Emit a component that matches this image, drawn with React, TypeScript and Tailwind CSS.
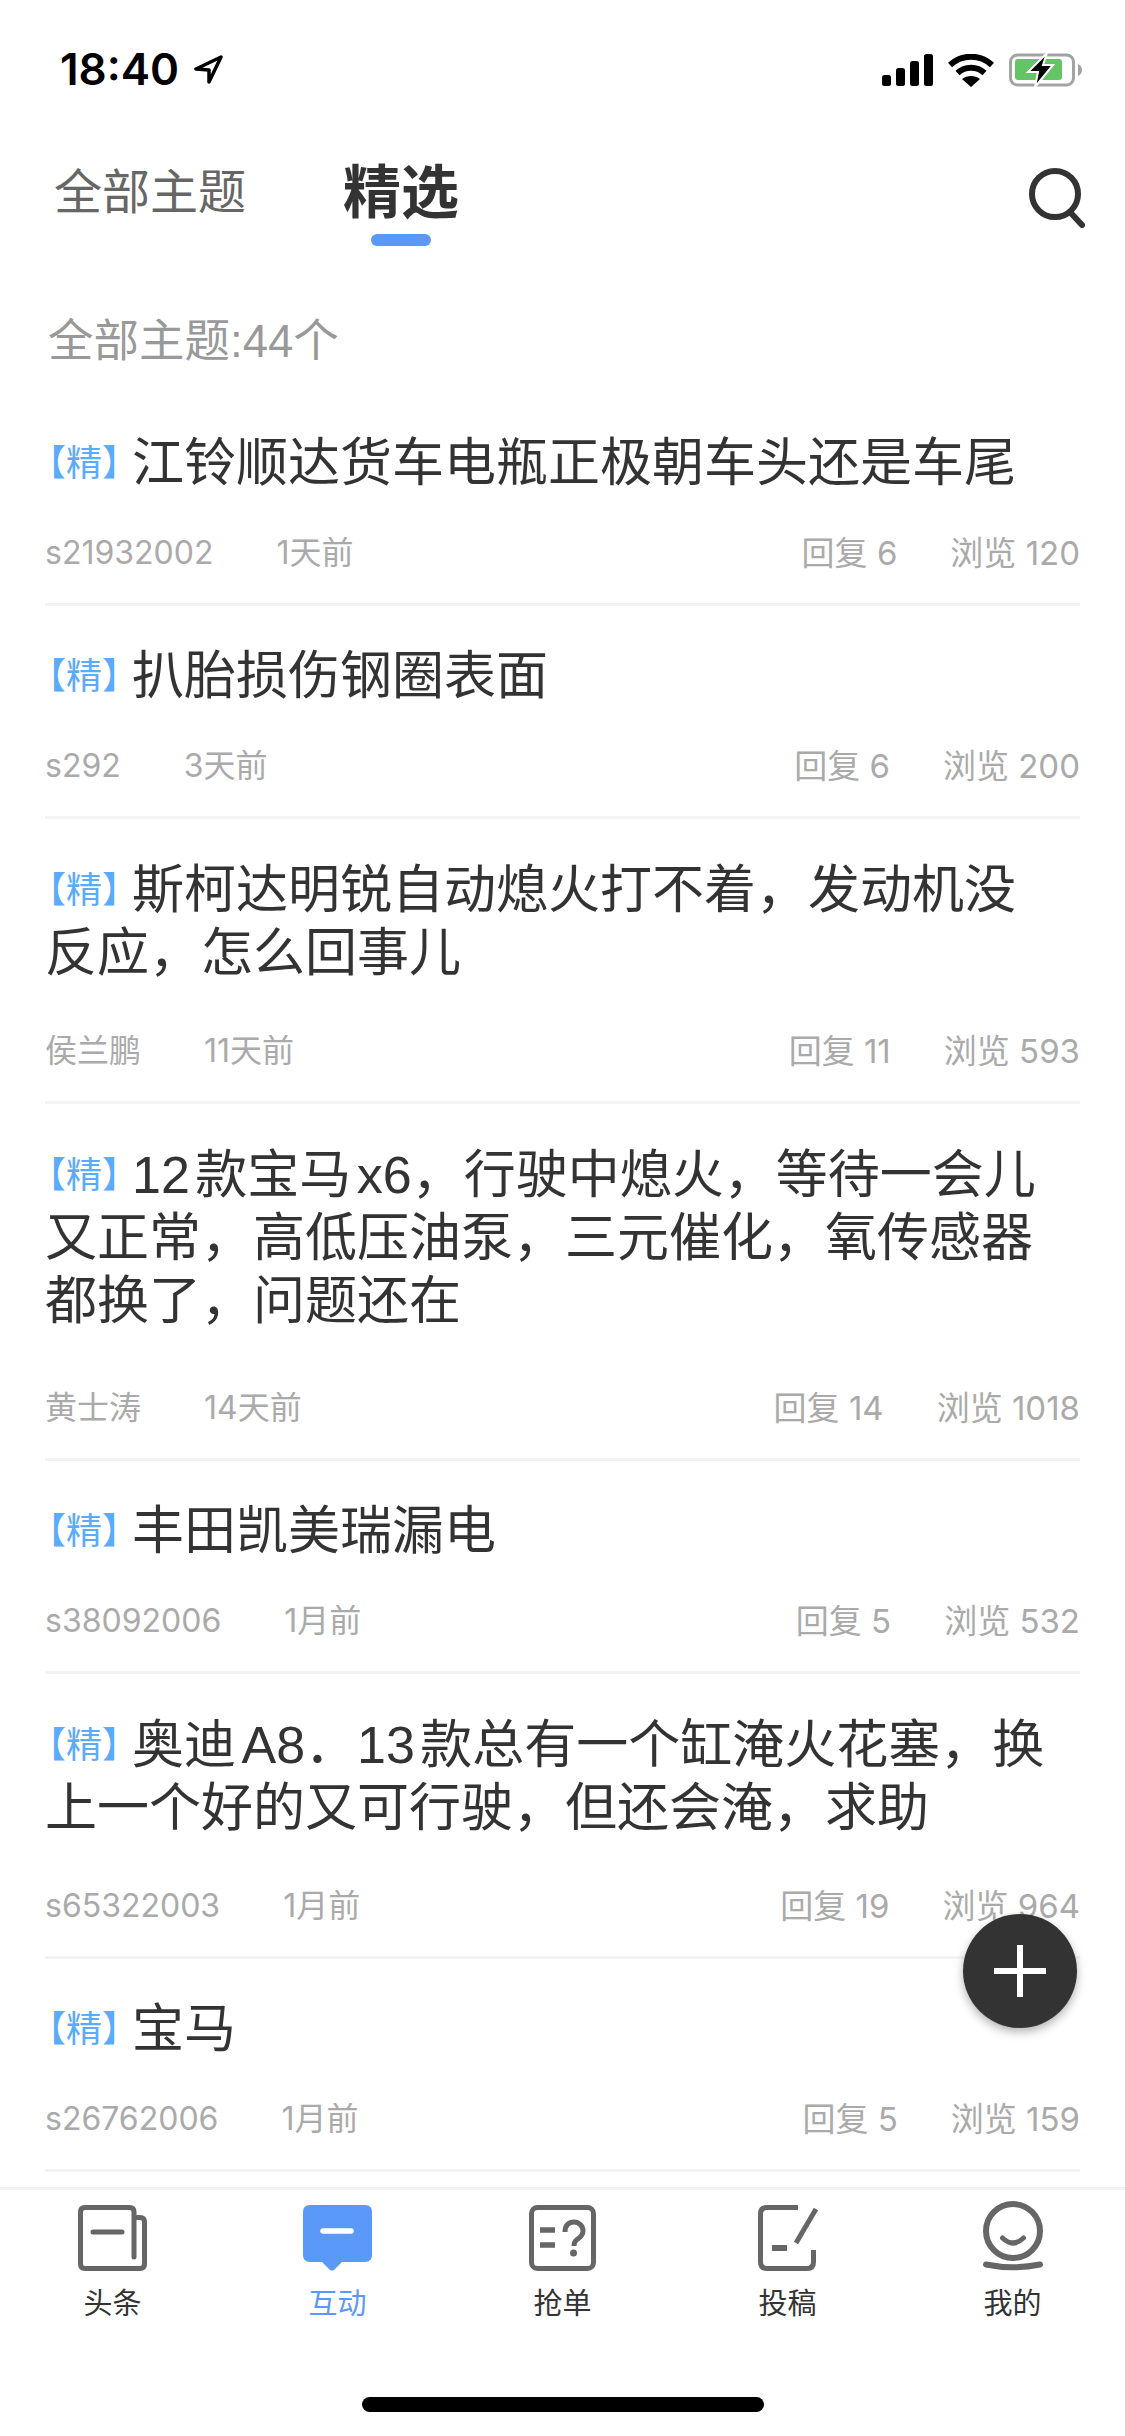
const topics = [
  { title: '江铃顺达货车电瓶正极朝车头还是车尾', author: 's21932002', time: '1天前', replies: 6, views: 120, bodyClass: 'h-[101px]' },
  { title: '扒胎损伤钢圈表面', author: 's292', time: '3天前', replies: 6, views: 200, bodyClass: 'h-[101px]' },
  { title: '斯柯达明锐自动熄火打不着，发动机没反应，怎么回事儿', author: '侯兰鹏', time: '11天前', replies: 11, views: 593, bodyClass: 'h-[173px] pt-[1px]' },
  { title: '12 款宝马 x6，行驶中熄火，等待一会儿又正常，高低压油泵，三元催化，氧传感器都换了，问题还在', author: '黄士涛', time: '14天前', replies: 14, views: 1018, bodyClass: 'h-[245px] pt-[1px]' },
  { title: '丰田凯美瑞漏电', author: 's38092006', time: '1月前', replies: 5, views: 532, bodyClass: 'h-[101px]' },
  { title: '奥迪 A8．13 款总有一个缸淹火花塞，换上一个好的又可行驶，但还会淹，求助', author: 's65322003', time: '1月前', replies: 19, views: 964, bodyClass: 'h-[173px] pt-[1px]' },
  { title: '宝马', author: 's26762006', time: '1月前', replies: 5, views: 159, bodyClass: 'h-[101px]' },
];

function StatusIcons() {
  return (
    <div className="flex items-center">
      <svg width="51" height="32" viewBox="0 0 51 32" fill="#000">
        <rect x="0" y="21" width="9" height="11" rx="2.5" />
        <rect x="14" y="14" width="9" height="18" rx="2.5" />
        <rect x="28" y="7" width="9" height="25" rx="2.5" />
        <rect x="42" y="0" width="9" height="32" rx="2.5" />
      </svg>
      <svg className="ml-[15px]" width="46" height="33" viewBox="0 0 46 33" fill="none" stroke="#000" strokeWidth="6">
        <path d="M2 11 C14 0 32 0 44 11" />
        <path d="M9.5 19 C17 12 29 12 36.5 19" />
        <path d="M23 33 L14 25 C19 21 27 21 32 25 Z" fill="#000" stroke="none" />
      </svg>
      <svg className="ml-[15px]" width="73" height="36" viewBox="0 0 73 36">
        <rect x="1.5" y="3" width="63" height="30" rx="7" fill="none" stroke="#a3a3a3" strokeWidth="3" />
        <rect x="6" y="7" width="47" height="21" rx="3" fill="#65c466" />
        <path d="M69 12 C71.5 13 73 15 73 18 C73 21 71.5 23 69 24 Z" fill="#a3a3a3" />
        <path d="M38 1 L19 20 L29 20 L26 35 L44 13 L34 13 Z" fill="#000" stroke="#fff" strokeWidth="2" />
      </svg>
    </div>
  );
}

function NewsIcon() {
  return (
    <svg width="69" height="66" viewBox="0 0 69 66" fill="none" stroke="#666" strokeWidth="5" strokeLinecap="round">
      <path d="M56 52 V7 Q56 2.500 51.500 2.500 H7 Q2.500 2.500 2.500 7 V59 Q2.500 63.500 7 63.500 H62 Q66.500 63.500 66.500 59 V17 Q66.500 12.500 62 12.500 H58" />
      <path d="M15 27 H44" />
    </svg>
  );
}

function ChatIcon() {
  return (
    <svg width="69" height="66" viewBox="0 0 69 66">
      <path d="M7 0 H62 Q69 0 69 7 V50 Q69 57 62 57 H39 L31 65 Q29 66 27 65 L19 57 H7 Q0 57 0 50 V7 Q0 0 7 0 Z" fill="#5b99f8" />
      <path d="M20 26 H48" stroke="#fff" strokeWidth="5.500" strokeLinecap="round" />
    </svg>
  );
}

function QuestionIcon() {
  return (
    <svg width="67" height="66" viewBox="0 0 67 66" fill="none" stroke="#666" strokeWidth="5">
      <rect x="2.500" y="2.500" width="62" height="61" rx="6" />
      <path d="M11 25 H26 M11 40 H26" strokeWidth="5.500" />
      <path d="M36 27 C36 20 40 17 45 17 C50 17 54 21 54 26 C54 31 50 33 47.500 35 C45.500 36.500 45 38 45 41" />
      <circle cx="44.500" cy="48" r="3.500" fill="#666" stroke="none" />
    </svg>
  );
}

function WriteIcon() {
  return (
    <svg width="60" height="66" viewBox="0 0 60 66" fill="none" stroke="#666" strokeWidth="5">
      <path d="M40 2.500 H9 Q2.500 2.500 2.500 9 V57 Q2.500 63.500 9 63.500 H49 Q55.500 63.500 55.500 57 V45" />
      <path d="M58 4 L38 38" />
      <path d="M14 43 H29" strokeWidth="6" />
    </svg>
  );
}

function MeIcon() {
  return (
    <svg width="60" height="70" viewBox="0 0 60 70" fill="none" stroke="#666" strokeLinecap="round">
      <circle cx="30" cy="30" r="27" strokeWidth="6" />
      <path d="M19.500 37 Q30 47 40.500 37" strokeWidth="5" />
      <path d="M3 63.500 Q30 69 57 63.500" strokeWidth="6" />
    </svg>
  );
}

const tabs = [
  { label: '头条', icon: <NewsIcon /> },
  { label: '互动', icon: <ChatIcon />, active: true },
  { label: '抢单', icon: <QuestionIcon /> },
  { label: '投稿', icon: <WriteIcon /> },
  { label: '我的', icon: <MeIcon /> },
];

export default function App() {
  return (
    <div className="relative flex h-[2436px] w-[1125px] flex-col overflow-hidden bg-white [font-family:'Liberation_Sans','Noto_Sans_CJK_SC',sans-serif]">
      <div className="flex h-[158px] shrink-0 items-start justify-between pl-[60px] pr-[43px] pt-[52px]">
        <div className="flex items-center">
          <span className="text-[44px] leading-[34px] font-semibold text-black [font-family:Inter,sans-serif]">18:40</span>
          <svg className="ml-[15px]" width="29" height="29" viewBox="0 0 29 29" fill="none" stroke="#000" strokeWidth="3.500" strokeLinejoin="round">
            <path d="M27 2 L2 14 L15 15 L15 27 Z" />
          </svg>
        </div>
        <StatusIcons />
      </div>

      <div className="flex h-[133px] shrink-0 items-start justify-between pl-[54px] pr-[40px]">
        <div className="flex items-start gap-[97px]">
          <span className="text-[48px] leading-[70px] text-[#666]">全部主题</span>
          <div className="flex flex-col items-center">
            <span className="text-[58px] leading-[70px] font-bold text-[#333]">精选</span>
            <span className="mt-[6px] h-[12px] w-[60px] rounded-full bg-[#5b99f8]" />
          </div>
        </div>
        <svg className="mt-[10px]" width="56" height="60" viewBox="0 0 56 60" fill="none" stroke="#333" strokeWidth="6" strokeLinecap="round">
          <circle cx="26" cy="26" r="23" />
          <path d="M41 44 L53 57" />
        </svg>
      </div>

      <div className="shrink-0 pl-[48px] text-[45.5px] leading-[102px] text-[#999]">全部主题:44个</div>

      <div className="mx-[45px] min-h-0 flex-1">
        {topics.map((topic) => (
          <div key={topic.author} className="border-b-[3px] border-[#f3f3f3] pt-[39px] pb-[30px]">
            <div className={`${topic.bodyClass} pr-[25px] text-[52px] leading-[63px] text-[#333] [word-spacing:-9px]`}>
              <span className="mr-[-6px] ml-[-15px] align-[5px] text-[36px] text-[#5aabfa]">【精】</span>
              {topic.title}
            </div>
            <div className="flex justify-between text-[32px] leading-[40px] text-[#aaa] [font-family:Inter,'Noto_Sans_CJK_SC',sans-serif]">
              <div className="flex gap-[63px]">
                <span>{topic.author}</span>
                <span>{topic.time}</span>
              </div>
              <div className="flex gap-[53px] text-[33px]">
                <span>回复 {topic.replies}</span>
                <span>浏览 {topic.views}</span>
              </div>
            </div>
          </div>
        ))}
      </div>

      <div className="h-[249px] shrink-0 border-t-[3px] border-[#f3f3f3]">
        <div className="grid grid-cols-5 pt-[12px]">
          {tabs.map((tab) => (
            <div key={tab.label} className="flex flex-col items-center">
              <div className="flex h-[69px] items-end">{tab.icon}</div>
              <span className={`mt-[15px] text-[29px] leading-[36px] ${tab.active ? 'text-[#5b99f8]' : 'text-[#333]'}`}>{tab.label}</span>
            </div>
          ))}
        </div>
      </div>

      <div className="absolute bottom-[24px] left-[362px] h-[15px] w-[402px] rounded-full bg-black" />

      <button
        type="button"
        className="absolute left-[963px] top-[1914px] flex h-[114px] w-[114px] items-center justify-center rounded-full bg-[#333] shadow-[0_4px_10px_rgba(0,0,0,0.3)]"
      >
        <svg width="52" height="52" viewBox="0 0 52 52" stroke="#fff" strokeWidth="6">
          <path d="M0 26 H52 M26 0 V52" />
        </svg>
      </button>
    </div>
  );
}
